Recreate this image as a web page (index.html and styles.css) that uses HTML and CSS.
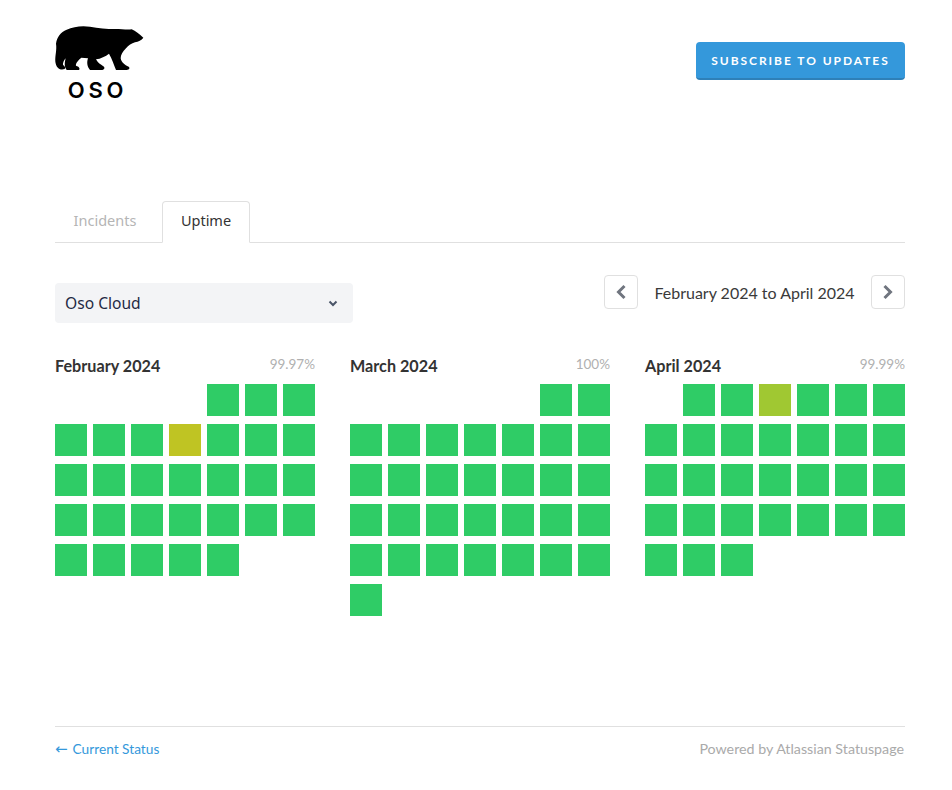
FILE: index.html
```html
<!DOCTYPE html>
<html lang="en">
<head>
    <meta charset="UTF-8">
    <meta name="viewport" content="width=device-width, initial-scale=1.0">
    <title>Oso Status - Uptime History</title>
    <link rel="stylesheet" href="styles.css">
</head>
<body>
    <div class="container">
        <header class="header">
            <a class="logo" href="#">
                <svg class="bear" width="90" height="50" viewBox="45 30 270 150">
                    <path d="M48 86 C50 68 62 50 80 44 C100 35 125 31 150 35 C175 39 200 42 225 42 C245 42 262 45 275 43 C287 48 298 58 310 68 C305 76 295 79 285 82 C275 85 265 92 258 100 C248 110 242 120 242 130 C244 142 254 150 266 155 C271 160 268 165 255 165 L228 165 C222 150 216 132 207 116 C197 124 182 131 168 133 C172 142 180 148 192 155 C196 162 190 165 180 165 L150 165 C141 155 140 142 144 130 L124 128 C114 136 106 146 108 152 C117 155 121 160 117 165 L80 165 C72 155 74 142 77 130 C72 136 68 143 69 150 C76 155 78 160 72 163 C56 166 48 155 46 140 C45 120 51 105 48 86 Z"/>
                </svg>
                <span class="logoText">OSO</span>
            </a>
            <a class="subscribeBtn" href="#">Subscribe to updates</a>
        </header>

        <nav class="tabs">
            <a class="tab" href="#">Incidents</a>
            <a class="tab tabActive" href="#">Uptime</a>
        </nav>

        <div class="controls">
            <div class="select">
                <span>Oso Cloud</span>
                <svg class="selectArrow" width="10" height="7" viewBox="0 0 10 7"><path d="M1.5 1.5 L5 5 L8.5 1.5" /></svg>
            </div>
            <div class="pager">
                <a class="pagerBtn" href="#"><svg width="12" height="16" viewBox="0 0 12 16"><path d="M9.5 2 L3.5 8 L9.5 14" /></svg></a>
                <span class="pagerLabel">February 2024 to April 2024</span>
                <a class="pagerBtn" href="#"><svg width="12" height="16" viewBox="0 0 12 16"><path d="M2.5 2 L8.5 8 L2.5 14" /></svg></a>
            </div>
        </div>

        <div class="months">
            <section class="month">
                <div class="monthHead"><h4>February 2024</h4><span class="percent">99.97%</span></div>
                <div class="days">
                    <div></div><div></div><div></div><div></div>
                    <div class="day"></div><div class="day"></div><div class="day"></div>
                    <div class="day"></div><div class="day"></div><div class="day"></div><div class="day partialFeb"></div><div class="day"></div><div class="day"></div><div class="day"></div>
                    <div class="day"></div><div class="day"></div><div class="day"></div><div class="day"></div><div class="day"></div><div class="day"></div><div class="day"></div>
                    <div class="day"></div><div class="day"></div><div class="day"></div><div class="day"></div><div class="day"></div><div class="day"></div><div class="day"></div>
                    <div class="day"></div><div class="day"></div><div class="day"></div><div class="day"></div><div class="day"></div>
                </div>
            </section>
            <section class="month">
                <div class="monthHead"><h4>March 2024</h4><span class="percent">100%</span></div>
                <div class="days">
                    <div></div><div></div><div></div><div></div><div></div>
                    <div class="day"></div><div class="day"></div>
                    <div class="day"></div><div class="day"></div><div class="day"></div><div class="day"></div><div class="day"></div><div class="day"></div><div class="day"></div>
                    <div class="day"></div><div class="day"></div><div class="day"></div><div class="day"></div><div class="day"></div><div class="day"></div><div class="day"></div>
                    <div class="day"></div><div class="day"></div><div class="day"></div><div class="day"></div><div class="day"></div><div class="day"></div><div class="day"></div>
                    <div class="day"></div><div class="day"></div><div class="day"></div><div class="day"></div><div class="day"></div><div class="day"></div><div class="day"></div>
                    <div class="day"></div>
                </div>
            </section>
            <section class="month">
                <div class="monthHead"><h4>April 2024</h4><span class="percent">99.99%</span></div>
                <div class="days">
                    <div></div>
                    <div class="day"></div><div class="day"></div><div class="day partialApr"></div><div class="day"></div><div class="day"></div><div class="day"></div>
                    <div class="day"></div><div class="day"></div><div class="day"></div><div class="day"></div><div class="day"></div><div class="day"></div><div class="day"></div>
                    <div class="day"></div><div class="day"></div><div class="day"></div><div class="day"></div><div class="day"></div><div class="day"></div><div class="day"></div>
                    <div class="day"></div><div class="day"></div><div class="day"></div><div class="day"></div><div class="day"></div><div class="day"></div><div class="day"></div>
                    <div class="day"></div><div class="day"></div><div class="day"></div>
                </div>
            </section>
        </div>

        <footer class="footer">
            <a class="backLink" href="#"><span class="arrow">&larr;</span>Current Status</a>
            <a class="powered" href="#">Powered by Atlassian Statuspage</a>
        </footer>
    </div>
</body>
</html>
```

FILE: styles.css
```css
body {
    margin: 0;
    font-family: Lato, 'Liberation Sans', sans-serif;
    color: #333;
    background-color: #fff;
}

a {
    text-decoration: none;
}

.container {
    width: 850px;
    margin-left: 55px;
}

.header {
    display: flex;
    justify-content: space-between;
    align-items: flex-start;
    height: 201px;
}

.logo {
    display: flex;
    flex-direction: column;
    align-items: center;
    width: 90px;
    margin-top: 25px;
    color: #000;
}

.bear {
    display: block;
}

.bear path {
    fill: #000;
}

.logoText {
    font-family: Inter, sans-serif;
    font-size: 22px;
    line-height: 24px;
    font-weight: 600;
    letter-spacing: 3.8px;
    margin-right: 5px;
    margin-top: 3px;
}

.subscribeBtn {
    margin-top: 42px;
    width: 209px;
    height: 38px;
    box-sizing: border-box;
    display: flex;
    align-items: center;
    justify-content: center;
    background-color: #3498db;
    border-bottom: 2px solid #2e80b8;
    border-radius: 4px;
    color: #fff;
    font-size: 12px;
    font-weight: 700;
    letter-spacing: 1.95px;
    text-transform: uppercase;
}

.tabs {
    display: flex;
    height: 42px;
    box-sizing: border-box;
    border-bottom: 1px solid #e0e0e0;
}

.tab {
    width: 107px;
    height: 42px;
    box-sizing: border-box;
    padding-bottom: 5px;
    display: flex;
    align-items: center;
    justify-content: center;
    font-family: 'Noto Sans', sans-serif;
    font-size: 14.5px;
    color: #b5b5b5;
}

.tab:first-child {
    padding-right: 7px;
}

.tabActive {
    width: 88px;
    color: #333;
    background-color: #fff;
    border: 1px solid #e0e0e0;
    border-bottom: 1px solid #fff;
    border-radius: 4px 4px 0 0;
}

.controls {
    display: flex;
    justify-content: space-between;
    align-items: flex-start;
    height: 114px;
}

.select {
    margin-top: 40px;
    width: 298px;
    height: 40px;
    box-sizing: border-box;
    padding: 0 15px 0 10px;
    display: flex;
    align-items: center;
    justify-content: space-between;
    background-color: #f3f4f6;
    border-radius: 4px;
    font-family: 'Noto Sans', sans-serif;
    font-size: 15.6px;
    color: #1f2a44;
}

.selectArrow path {
    fill: none;
    stroke: #4a5568;
    stroke-width: 2;
}

.pager {
    margin-top: 32px;
    display: flex;
    align-items: center;
}

.pagerBtn {
    width: 34px;
    height: 34px;
    box-sizing: border-box;
    display: flex;
    align-items: center;
    justify-content: center;
    border: 1px solid #e0e0e0;
    border-radius: 4px;
}

.pagerBtn path {
    fill: none;
    stroke: #70757f;
    stroke-width: 3;
}

.pagerLabel {
    width: 233px;
    padding-top: 1px;
    text-align: center;
    font-size: 16px;
    color: #3a3a3a;
}

.months {
    display: flex;
    gap: 35px;
    height: 369px;
}

.month {
    width: 260px;
}

.monthHead {
    display: flex;
    justify-content: space-between;
    align-items: center;
    height: 27px;
    box-sizing: border-box;
    padding-bottom: 11px;
}

.monthHead h4 {
    margin: 0;
    font-size: 16.2px;
    font-weight: 700;
    color: #333;
}

.percent {
    font-size: 13.5px;
    color: #b0b0b0;
    margin-bottom: 2px;
}

.days {
    display: grid;
    grid-template-columns: repeat(7, 32px);
    grid-auto-rows: 32px;
    column-gap: 6px;
    row-gap: 8px;
}

.day {
    background-color: #2fcc66;
}

.partialFeb {
    background-color: #bfc423;
}

.partialApr {
    background-color: #a0c832;
}

.footer {
    display: flex;
    justify-content: space-between;
    align-items: center;
    border-top: 1px solid #e0e0e0;
    height: 45px;
    padding-bottom: 2px;
    box-sizing: border-box;
}

.backLink {
    color: #3498db;
    font-size: 13.7px;
}

.arrow {
    font-family: 'DejaVu Sans', sans-serif;
    font-size: 15px;
    line-height: 1;
    margin-right: 5px;
}

.powered {
    color: #aaa;
    font-size: 14.25px;
    margin-right: 1px;
}
```
